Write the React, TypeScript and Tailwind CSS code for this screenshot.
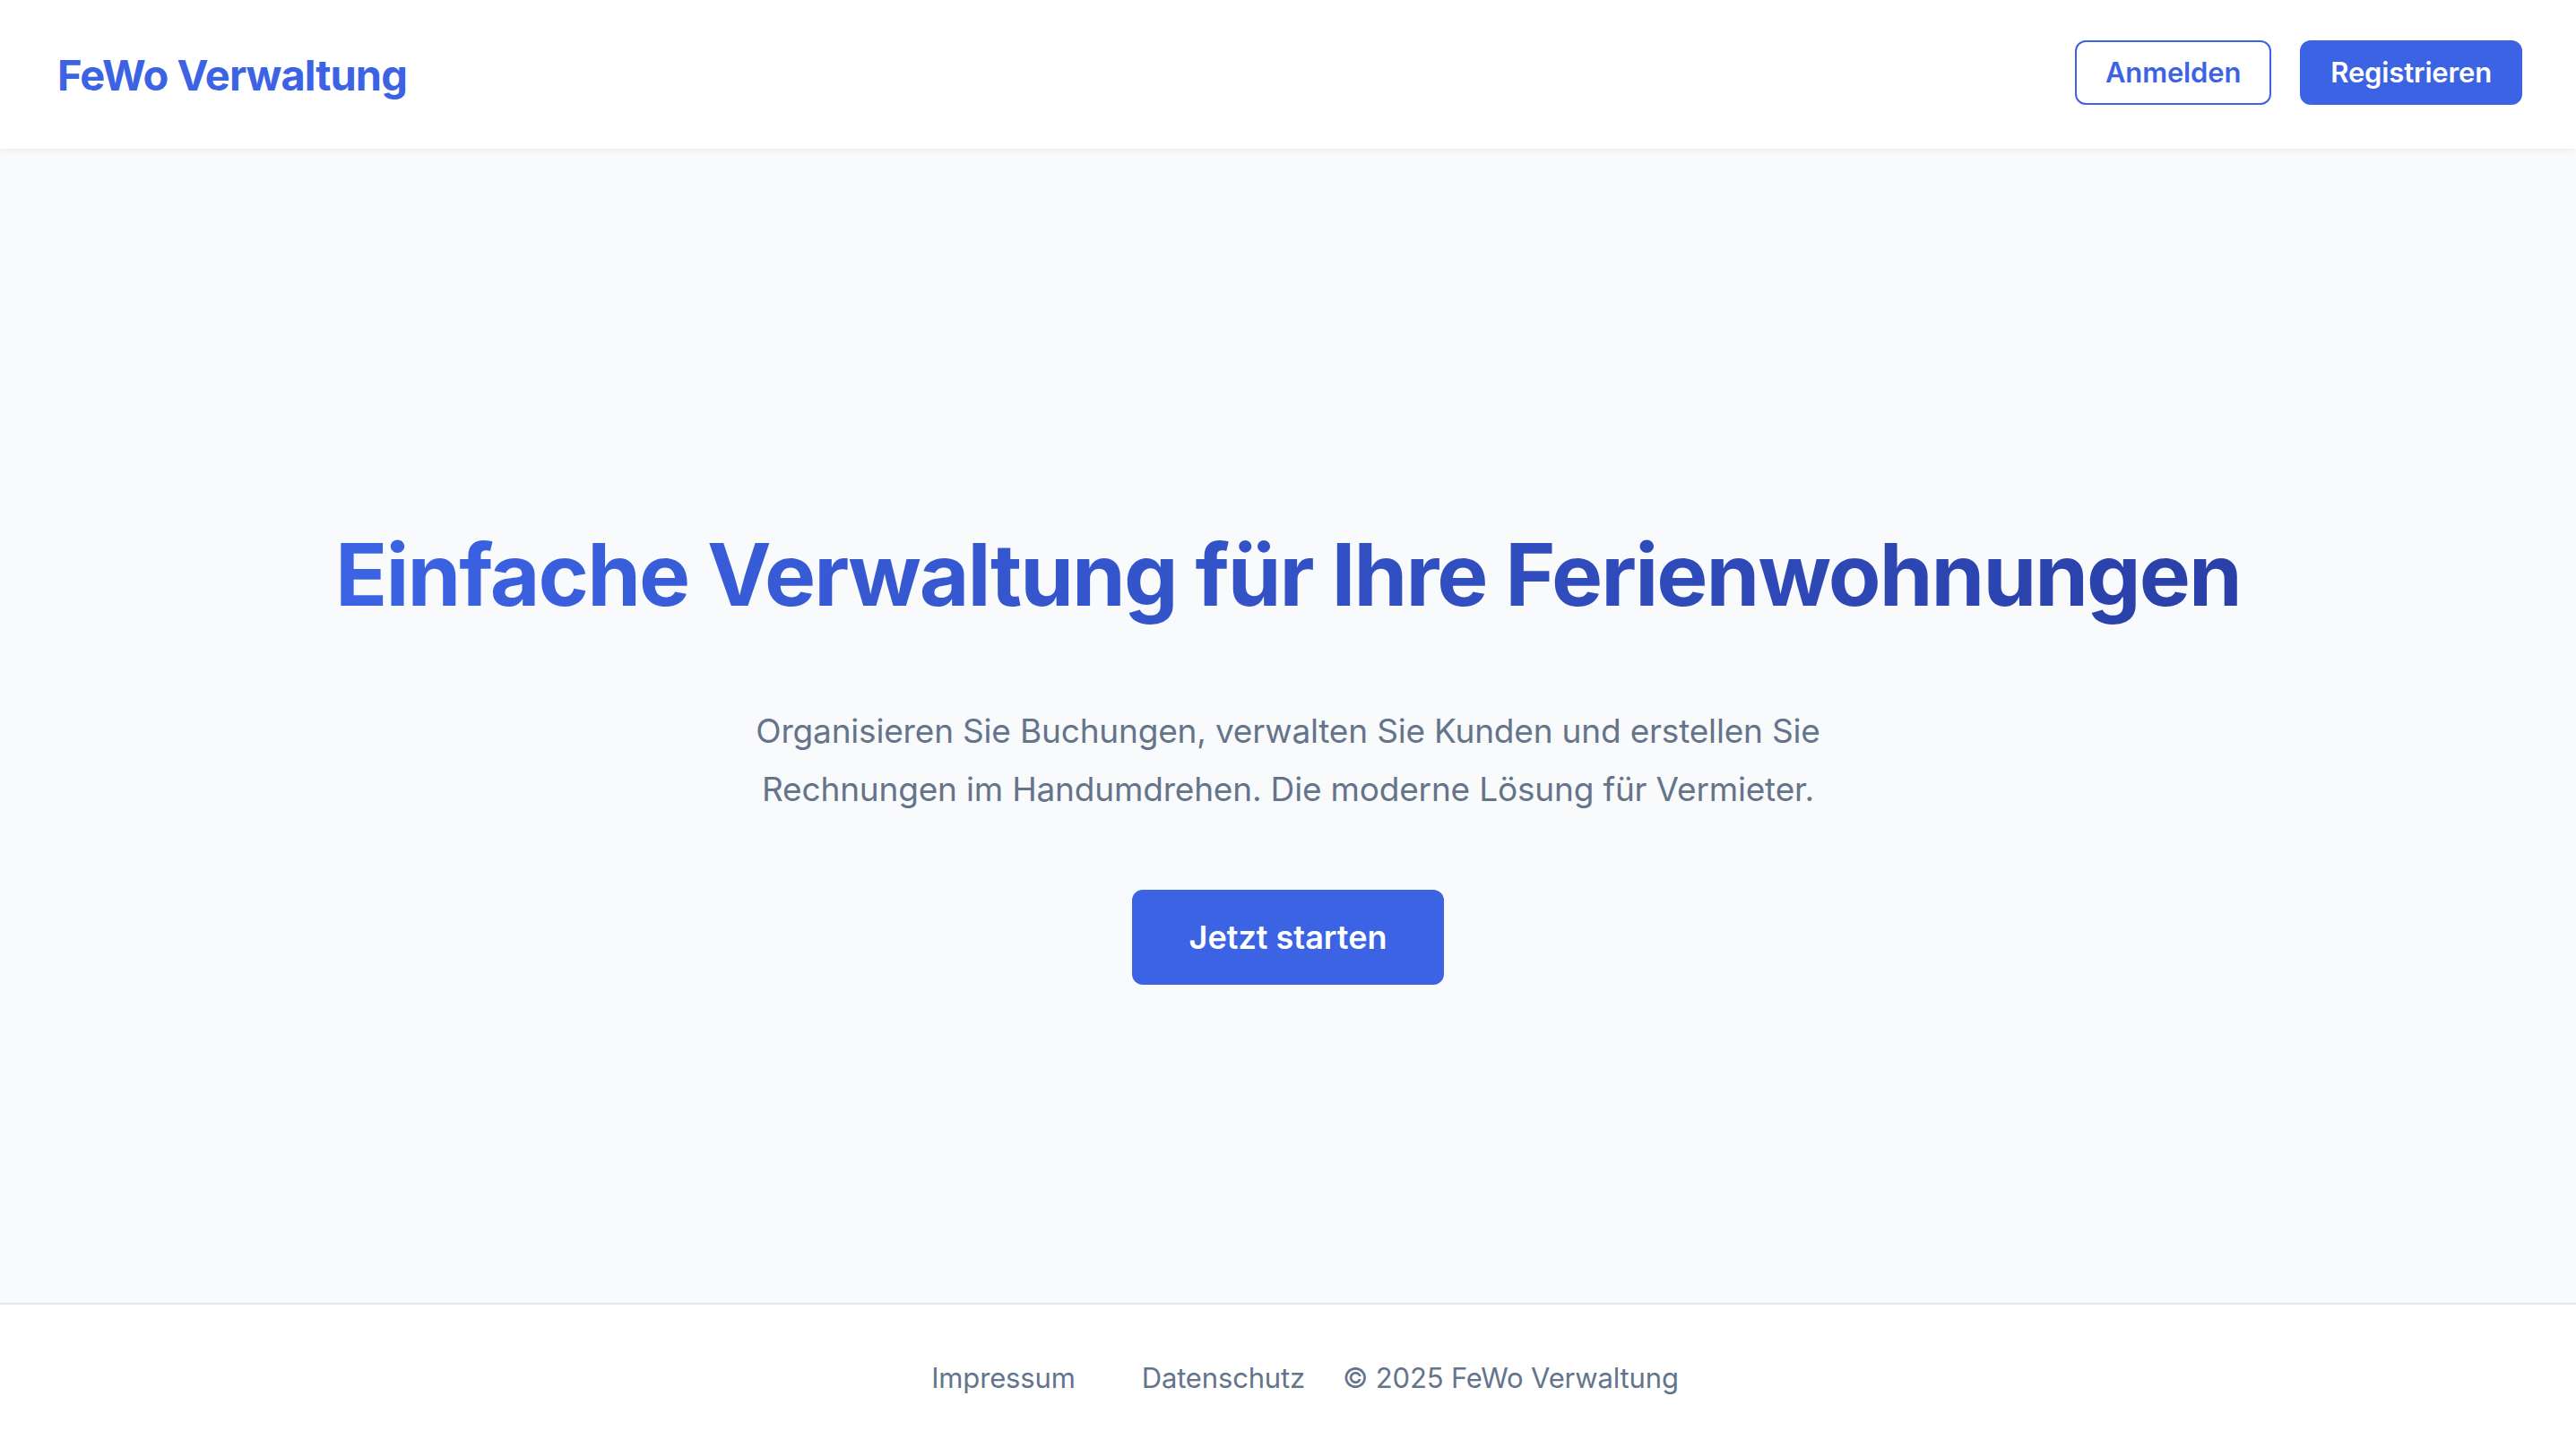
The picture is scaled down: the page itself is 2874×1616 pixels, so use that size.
import React from 'react';

export default function App() {
  return (
    <div className="min-h-screen flex flex-col bg-[#f9fafb] font-['Inter',sans-serif]">
      <header className="relative z-10 bg-white shadow-[0_2px_6px_rgba(15,23,42,0.06)]">
        <div className="flex items-center justify-between pl-16 pr-[60px] h-[166px]">
          <span className="text-[47px] leading-none font-bold text-[#3b63e3] tracking-[-0.02em]">FeWo Verwaltung</span>
          <div className="flex items-center gap-8 mb-[5px]">
            <button className="px-8 py-2.5 text-[31px] leading-[48px] font-semibold tracking-[-0.005em] text-[#3b63e3] bg-white border-2 border-[#3b63e3] rounded-xl">
              Anmelden
            </button>
            <button className="px-8 py-2.5 text-[31px] leading-[48px] font-semibold tracking-[-0.005em] text-white bg-[#3b63e3] border-2 border-[#3b63e3] rounded-xl">
              Registrieren
            </button>
          </div>
        </div>
      </header>

      <main className="flex-1 flex flex-col items-center justify-center pt-[72px] text-center">
        <h1 className="text-[96px] leading-none pb-5 font-bold tracking-[-0.02em] bg-linear-to-r from-[#3b63e3] to-[#2a40a8] bg-clip-text text-transparent mb-[74px]">
          Einfache Verwaltung für Ihre Ferienwohnungen
        </h1>
        <p className="max-w-[1344px] text-[37px] leading-[65px] tracking-[-0.005em] text-[#64748b] mb-20">
          Organisieren Sie Buchungen, verwalten Sie Kunden und erstellen Sie Rechnungen im Handumdrehen. Die moderne Lösung für Vermieter.
        </p>
        <button className="px-16 py-[25px] text-[36px] leading-[56px] font-semibold text-white bg-[#3b63e3] rounded-xl">
          Jetzt starten
        </button>
      </main>

      <footer className="bg-white border-t-2 border-[#e5e7eb] pt-[58px] pb-[54px]">
        <div className="flex items-center justify-center pl-[38px] text-[31px] leading-[48px] tracking-[-0.005em] text-[#64748b]">
          <a className="mr-[74px]">Impressum</a>
          <a className="mr-[42px]">Datenschutz</a>
          <span>© 2025 FeWo Verwaltung</span>
        </div>
      </footer>
    </div>
  );
}
